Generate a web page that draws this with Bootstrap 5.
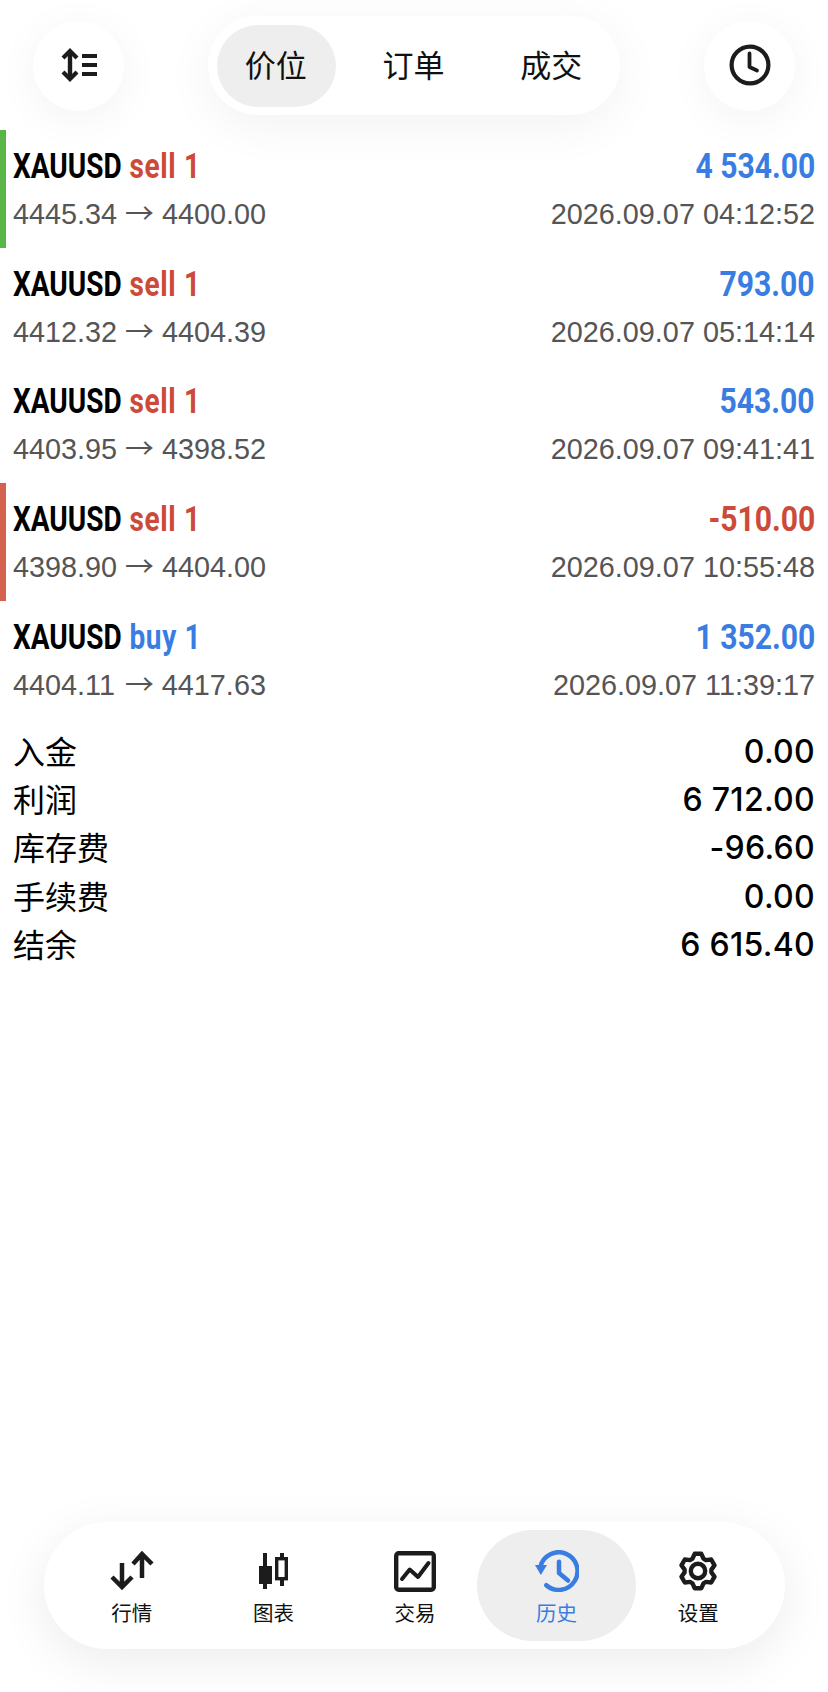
<!DOCTYPE html>
<html lang="zh-CN">
<head>
    <meta charset="UTF-8">
    <meta name="viewport" content="width=device-width, initial-scale=1.0">
    <title>历史</title>
    <link rel="stylesheet" href="https://cdn.jsdelivr.net/npm/bootstrap@5.3.0/dist/css/bootstrap.min.css">
    <style>
        html, body { height: 100%; }
        body { width: 828px; height: 1692px; background: #fff; overflow: hidden; font-family: "Liberation Sans", "Noto Sans CJK SC", sans-serif; color: #000; }
        .app-top { padding: 16px 33px 0; height: 130px; }
        .round-btn { width: 91px; height: 90px; margin-top: 5px; padding-bottom: 3px; border-radius: 50%; background: #fff; box-shadow: 0 8px 44px rgba(0,0,0,.05); }
        .seg-wrap { width: 412px; height: 99px; padding: 9px; border-radius: 50px; background: #fff; box-shadow: 0 10px 50px rgba(0,0,0,.055); }
        .seg-item { width: 119px; height: 82px; margin-right: 19px; padding: 0 1px 4px 0; border-radius: 41px; font-size: 31px; font-family: "Noto Sans CJK SC", sans-serif; color: #111; }
        .seg-item:last-child { margin-right: 0; }
        .seg-item.active-seg { background: #eeeeee; }
        .deal-row { height: 117.7px; padding: 0 13px 0 13px; position: relative; }
        .side-bar { position: absolute; left: 0; top: 0; bottom: 0; width: 6px; }
        .bar-green .side-bar { background: #5ab547; }
        .bar-red .side-bar { background: #d5614f; }
        .deal-top { height: 59px; padding-top: 17px; font-family: Roboto, "Liberation Sans", sans-serif; font-weight: 700; font-size: 35px; line-height: 40px; white-space: nowrap; }
        .fit-left { transform: scaleX(.8); transform-origin: left center; }
        .fit-left span { letter-spacing: .8px; margin-left: 1px; }
        .fit-right { transform: scaleX(.86); transform-origin: right center; }
        .deal-bottom { padding-top: 7px; font-size: 28.8px; line-height: 36px; color: #555; }
        .px-from { display: inline-block; min-width: 104px; }
        .px-arrow { font-family: "Noto Sans CJK SC", sans-serif; margin: 0 8px; line-height: 0; }
        .c-red { color: #cc4a39; }
        .c-blue { color: #3a7de2; }
        .summary { padding: 9.5px 13px 0 13px; }
        .sum-row { height: 48.2px; font-size: 32px; font-family: "Noto Sans CJK SC", sans-serif; }
        .sum-label { margin-bottom: 4px; }
        .sum-row .num { font-family: Inter, "Liberation Sans", sans-serif; font-size: 32px; font-weight: 450; letter-spacing: .3px; }
        .tabbar { position: absolute; left: 44px; top: 1522px; width: 741px; height: 127px; border-radius: 64px; background: #fff; box-shadow: 0 12px 50px rgba(0,0,0,.08); padding: 8px 0 8px 17px; }
        .tab-item { width: 141.6px; height: 111px; padding-top: 20px; font-size: 20.5px; line-height: 28px; font-family: "Noto Sans CJK SC", sans-serif; color: #111; }
        .tab-ico { height: 42px; margin-bottom: 6px; }
        .tab-item.tab-on { background: #eeeeee; border-radius: 70px; color: #3a7de2; width: 159px; margin: 0 -8.7px; }
    </style>
</head>
<body class="position-relative">
    <div class="app-top d-flex justify-content-between align-items-start">
        <div class="round-btn d-flex align-items-center justify-content-center">
            <svg width="36" height="34" viewBox="0 0 36 34" fill="none" stroke="#1c1c1c"><path d="M9 3V31" stroke-width="4.4"/><path d="M2 10L9 3L16 10M2 24L9 31L16 24" stroke-width="4.2"/><path d="M21 8H36M21 17H36M21 26H36" stroke-width="4.2"/></svg>
        </div>
        <div class="seg-wrap d-flex">
            <div class="seg-item active-seg d-flex align-items-center justify-content-center">价位</div>
            <div class="seg-item d-flex align-items-center justify-content-center">订单</div>
            <div class="seg-item d-flex align-items-center justify-content-center">成交</div>
        </div>
        <div class="round-btn d-flex align-items-center justify-content-center">
            <svg width="42" height="42" viewBox="0 0 42 42" fill="none" stroke="#1c1c1c"><circle cx="21" cy="21" r="18.4" stroke-width="4.2"/><path d="M20.5 9.5V23L28 26.5" stroke-width="3.8" stroke-linecap="round" stroke-linejoin="round"/></svg>
        </div>
    </div>

    <div class="deal-row bar-green">
        <div class="side-bar"></div>
        <div class="deal-top d-flex justify-content-between"><div class="fit-left">XAUUSD <span class="c-red">sell 1</span></div><div class="fit-right c-blue">4 534.00</div></div>
        <div class="deal-bottom d-flex justify-content-between"><div><span class="px-from">4445.34</span><span class="px-arrow">→</span>4400.00</div><div>2026.09.07 04:12:52</div></div>
    </div>
    <div class="deal-row">
        <div class="deal-top d-flex justify-content-between"><div class="fit-left">XAUUSD <span class="c-red">sell 1</span></div><div class="fit-right c-blue">793.00</div></div>
        <div class="deal-bottom d-flex justify-content-between"><div><span class="px-from">4412.32</span><span class="px-arrow">→</span>4404.39</div><div>2026.09.07 05:14:14</div></div>
    </div>
    <div class="deal-row">
        <div class="deal-top d-flex justify-content-between"><div class="fit-left">XAUUSD <span class="c-red">sell 1</span></div><div class="fit-right c-blue">543.00</div></div>
        <div class="deal-bottom d-flex justify-content-between"><div><span class="px-from">4403.95</span><span class="px-arrow">→</span>4398.52</div><div>2026.09.07 09:41:41</div></div>
    </div>
    <div class="deal-row bar-red">
        <div class="side-bar"></div>
        <div class="deal-top d-flex justify-content-between"><div class="fit-left">XAUUSD <span class="c-red">sell 1</span></div><div class="fit-right c-red">-510.00</div></div>
        <div class="deal-bottom d-flex justify-content-between"><div><span class="px-from">4398.90</span><span class="px-arrow">→</span>4404.00</div><div>2026.09.07 10:55:48</div></div>
    </div>
    <div class="deal-row">
        <div class="deal-top d-flex justify-content-between"><div class="fit-left">XAUUSD <span class="c-blue">buy 1</span></div><div class="fit-right c-blue">1 352.00</div></div>
        <div class="deal-bottom d-flex justify-content-between"><div><span class="px-from">4404.11</span><span class="px-arrow">→</span>4417.63</div><div>2026.09.07 11:39:17</div></div>
    </div>

    <div class="summary">
        <div class="sum-row d-flex justify-content-between align-items-center"><div class="sum-label">入金</div><div class="num">0.00</div></div>
        <div class="sum-row d-flex justify-content-between align-items-center"><div class="sum-label">利润</div><div class="num">6 712.00</div></div>
        <div class="sum-row d-flex justify-content-between align-items-center"><div class="sum-label">库存费</div><div class="num">-96.60</div></div>
        <div class="sum-row d-flex justify-content-between align-items-center"><div class="sum-label">手续费</div><div class="num">0.00</div></div>
        <div class="sum-row d-flex justify-content-between align-items-center"><div class="sum-label">结余</div><div class="num">6 615.40</div></div>
    </div>

    <div class="tabbar d-flex">
        <div class="tab-item d-flex flex-column align-items-center">
            <div class="tab-ico d-flex align-items-center"><svg width="44" height="40" viewBox="0 0 44 40" fill="none" stroke="#1c1c1c" stroke-width="4.5"><path d="M12 12V37M2 26L12 36L22 26"/><path d="M32 27V4M23 13L32 3L42 13"/></svg></div>行情</div>
        <div class="tab-item d-flex flex-column align-items-center">
            <div class="tab-ico d-flex align-items-center"><svg width="30" height="36" viewBox="0 0 30 36" fill="#1c1c1c"><path d="M5 0h4v13H5zM1 13h13v18H1zM5 31h4v5H5z"/><path d="M22 0h4v6h-4zM22 26h4v7h-4z"/><rect x="18.7" y="5.7" width="9.6" height="20" fill="none" stroke="#1c1c1c" stroke-width="3.4"/></svg></div>图表</div>
        <div class="tab-item d-flex flex-column align-items-center">
            <div class="tab-ico d-flex align-items-center"><svg width="42" height="41" viewBox="0 0 42 41" fill="none" stroke="#1c1c1c"><rect x="2.2" y="2.2" width="37.6" height="36.6" rx="2.5" stroke-width="4.4"/><path d="M8 28L15.7 18.5L24 26L34.5 12" stroke-width="4" stroke-linecap="round" stroke-linejoin="round"/></svg></div>交易</div>
        <div class="tab-item tab-on d-flex flex-column align-items-center">
            <div class="tab-ico d-flex align-items-center"><svg width="44" height="42" viewBox="0 0 44 42" fill="none" stroke="#3a7de2" stroke-width="4.5"><path d="M5.5 16.4A18.8 18.8 0 1 1 11.3 35.2" stroke-linecap="round"/><path d="M0 15H12L5.8 25Z" fill="#3a7de2" stroke="none"/><path d="M24 11.7V23L33 30.5" stroke-linecap="round" stroke-linejoin="round"/></svg></div>历史</div>
        <div class="tab-item d-flex flex-column align-items-center">
            <div class="tab-ico d-flex align-items-center"><svg width="40" height="40" viewBox="0 0 40 40" fill="none" stroke="#1c1c1c" stroke-width="4.4" stroke-linejoin="round"><circle cx="20" cy="20" r="7.2"/><path d="M16.66 2.82H23.34L25.49 7.67L27.93 9.08L33.2 8.52L36.55 14.3L33.43 18.59V21.41L36.55 25.7L33.2 31.48L27.93 30.92L25.49 32.33L23.34 37.18H16.66L14.51 32.33L12.07 30.92L6.8 31.48L3.45 25.7L6.57 21.41V18.59L3.45 14.3L6.8 8.52L12.07 9.08L14.51 7.67Z"/></svg></div>设置</div>
    </div>

    <script src="https://cdn.jsdelivr.net/npm/bootstrap@5.3.0/dist/js/bootstrap.bundle.min.js"></script>
</body>
</html>
